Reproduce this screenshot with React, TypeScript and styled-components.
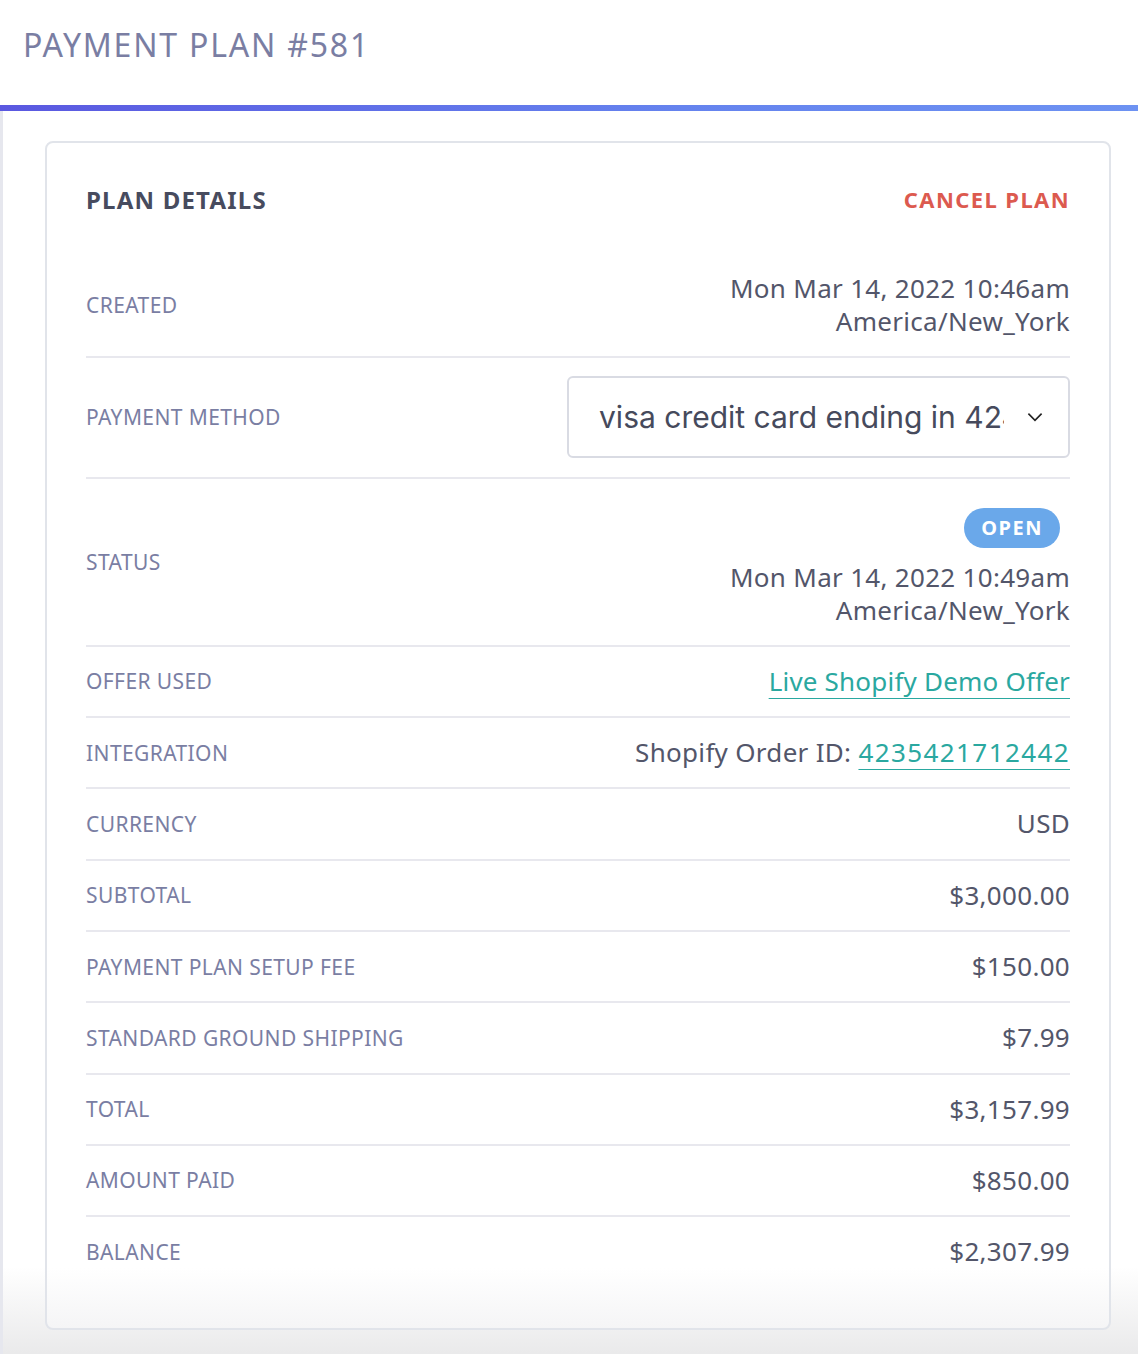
import styled, { createGlobalStyle } from "styled-components";

const GlobalStyle = createGlobalStyle`
  html, body {
    margin: 0;
    padding: 0;
    background: #ffffff;
    font-family: "Noto Sans", "Open Sans", sans-serif;
  }
`;

type Row = {
  label: string;
  value: string;
};

const amounts: Row[] = [
  { label: "Currency", value: "USD" },
  { label: "Subtotal", value: "$3,000.00" },
  { label: "Payment Plan Setup Fee", value: "$150.00" },
  { label: "Standard Ground Shipping", value: "$7.99" },
  { label: "Total", value: "$3,157.99" },
  { label: "Amount Paid", value: "$850.00" },
  { label: "Balance", value: "$2,307.99" },
];

function App() {
  return (
    <Page>
      <GlobalStyle />
      <TopBar>
        <PageTitle>Payment Plan #581</PageTitle>
      </TopBar>
      <AccentBar />
      <Main>
        <Card>
          <CardHeader>
            <CardTitle>Plan Details</CardTitle>
            <CancelButton>Cancel Plan</CancelButton>
          </CardHeader>

          <DetailRow>
            <Label>Created</Label>
            <Value>
              <span>Mon Mar 14, 2022 10:46am</span>
              <span>America/New_York</span>
            </Value>
          </DetailRow>

          <DetailRow>
            <Label>Payment Method</Label>
            <SelectBox>
              <SelectText>visa credit card ending in 4242</SelectText>
              <Chevron viewBox="0 0 20 20">
                <path d="M4 7 L10 13 L16 7" />
              </Chevron>
            </SelectBox>
          </DetailRow>

          <DetailRow>
            <Label>Status</Label>
            <Value>
              <Badge>Open</Badge>
              <span>Mon Mar 14, 2022 10:49am</span>
              <span>America/New_York</span>
            </Value>
          </DetailRow>

          <DetailRow>
            <Label>Offer Used</Label>
            <Value>
              <Link>Live Shopify Demo Offer</Link>
            </Value>
          </DetailRow>

          <DetailRow>
            <Label>Integration</Label>
            <Value>
              <span>
                Shopify Order ID: <Link $spaced>4235421712442</Link>
              </span>
            </Value>
          </DetailRow>

          {amounts.map((row) => (
            <DetailRow key={row.label}>
              <Label>{row.label}</Label>
              <Value>
                <span>{row.value}</span>
              </Value>
            </DetailRow>
          ))}
        </Card>
      </Main>
    </Page>
  );
}

const Page = styled.div`
  min-height: 100vh;
  display: flex;
  flex-direction: column;
`;

const TopBar = styled.header`
  height: 105px;
  display: flex;
  align-items: center;
  padding: 0 0 16px 23px;
  box-sizing: border-box;
  background: #fff;
`;

const PageTitle = styled.h1`
  margin: 0;
  font-size: 32px;
  font-weight: 400;
  letter-spacing: 1.8px;
  text-transform: uppercase;
  color: #7a7ea3;
`;

const AccentBar = styled.div`
  height: 6px;
  background: linear-gradient(90deg, #5a58e0 0%, #6583ee 60%, #6d92f2 100%);
`;

const Main = styled.main`
  flex: 1;
  padding: 30px 27px 27px 42px;
  border-left: 3px solid #e6e7ee;
  background: linear-gradient(
    to bottom,
    #ffffff 0%,
    #ffffff calc(100% - 90px),
    #e9e9ea 100%
  );
`;

const Card = styled.section`
  border: 2px solid #e1e4ea;
  border-radius: 8px;
  padding: 36px 39px 41px 39px;
  background: linear-gradient(
    to bottom,
    #ffffff 0%,
    #ffffff calc(100% - 60px),
    #f5f5f6 100%
  );
`;

const CardHeader = styled.div`
  height: 40px;
  display: flex;
  align-items: center;
  justify-content: space-between;
  margin-bottom: 35px;
`;

const CardTitle = styled.h2`
  margin: 0;
  font-size: 24px;
  font-weight: 700;
  letter-spacing: 1.2px;
  text-transform: uppercase;
  color: #474b5e;
`;

const CancelButton = styled.button`
  border: none;
  background: none;
  padding: 0;
  font-family: inherit;
  font-size: 22px;
  font-weight: 700;
  letter-spacing: 1.4px;
  text-transform: uppercase;
  color: #dc5a4f;
  cursor: pointer;
`;

const DetailRow = styled.div`
  display: flex;
  align-items: center;
  justify-content: space-between;
  padding: 18px 0 18.3px;
  & + & {
    border-top: 2px solid #e8e8ee;
  }
`;

const Label = styled.span`
  font-size: 21px;
  text-transform: uppercase;
  color: #7a7ea3;
  letter-spacing: 0.4px;
`;

const Value = styled.div`
  display: flex;
  flex-direction: column;
  align-items: flex-end;
  text-align: right;
  font-size: 26px;
  line-height: 33px;
  letter-spacing: 0.3px;
  color: #53566a;
`;

const Link = styled.a<{ $spaced?: boolean }>`
  color: #2aa8a0;
  letter-spacing: ${(p) => (p.$spaced ? "1.4px" : "0.2px")};
  text-decoration: underline;
  text-decoration-thickness: 1px;
  text-underline-offset: 7px;
  cursor: pointer;
`;

const Badge = styled.span`
  display: inline-flex;
  align-items: center;
  justify-content: center;
  height: 40px;
  padding: 0 17px;
  margin: 11px 10px 13px 0;
  border-radius: 20px;
  background: #6aa8ea;
  color: #fff;
  font-size: 20px;
  font-weight: 700;
  letter-spacing: 1.5px;
  line-height: 1;
  text-transform: uppercase;
`;

const SelectBox = styled.div`
  width: 503px;
  height: 82px;
  box-sizing: border-box;
  display: flex;
  align-items: center;
  padding: 0 22px 0 30px;
  border: 2px solid #d9dbe3;
  border-radius: 6px;
  background: #fff;
`;

const SelectText = styled.span`
  flex: 1;
  overflow: hidden;
  white-space: nowrap;
  font-family: Inter, "Noto Sans", sans-serif;
  font-size: 30px;
  color: #464a5c;
  margin-right: 20px;
`;

const Chevron = styled.svg`
  width: 22px;
  height: 22px;
  flex-shrink: 0;
  fill: none;
  stroke: #222;
  stroke-width: 1.5;
`;

export default App;
